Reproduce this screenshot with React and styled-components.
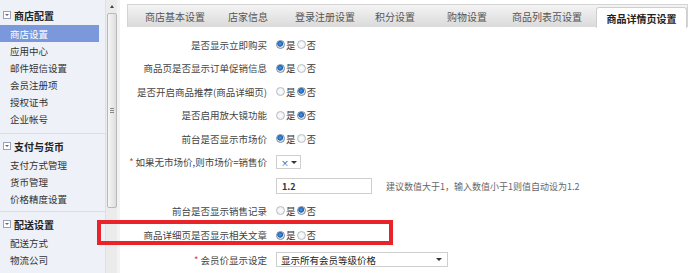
import React from "react";
import styled, { createGlobalStyle } from "styled-components";

const Global = createGlobalStyle`
  html, body { margin: 0; padding: 0; background: #fff; }
  body { font-family: "Noto Sans CJK SC", "Liberation Sans", sans-serif; color: #333; }
  * { box-sizing: border-box; }
`;

const Page = styled.div`
  position: relative;
  width: 690px;
  height: 273px;
  overflow: hidden;
  display: flex;
  background: #fff;
`;

const Sidebar = styled.div`
  width: 105px;
  flex: none;
  background: #eef1f7;
  display: flex;
  flex-direction: column;
`;

const Group = styled.div`
  padding: ${(p) => (p.$first ? "5px 0 6px" : "2px 0 4px")};
  border-top: ${(p) => (p.$first ? "none" : "1px solid #d9dde7")};
`;

const GroupHead = styled.div`
  height: 20px;
  display: flex;
  align-items: center;
  gap: 3px;
  padding-left: 3px;
  font-size: 10px;
  font-weight: bold;
  color: #222;
`;

const Toggle = styled.span`
  width: 8px;
  height: 8px;
  border: 1px solid #9aa3b5;
  background: #fff;
  display: flex;
  align-items: center;
  justify-content: center;
  &::after {
    content: "";
    border-left: 2px solid transparent;
    border-right: 2px solid transparent;
    border-top: 2px solid #667;
  }
`;

const Item = styled.div`
  height: 17px;
  width: 99px;
  display: flex;
  align-items: center;
  padding-left: 10px;
  font-size: 9.5px;
  white-space: nowrap;
  color: ${(p) => (p.$active ? "#fff" : "#333")};
  background: ${(p) => (p.$active ? "#7b98dc" : "transparent")};
`;

const Scroll = styled.div`
  width: 12px;
  flex: none;
  background: #ebebeb;
  border-left: 1px solid #e0e0e0;
  display: flex;
  flex-direction: column;
  align-items: center;
`;

const Arrow = styled.div`
  height: 12px;
  display: flex;
  align-items: center;
  &::after {
    content: "";
    border-left: 2.5px solid transparent;
    border-right: 2.5px solid transparent;
    border-bottom: 3px solid #444;
  }
`;

const Thumb = styled.div`
  width: 10px;
  height: 195px;
  margin-top: 1px;
  border: 1px solid #b9b9b9;
  border-radius: 2px;
  background: linear-gradient(to right, #f6f6f6, #dedede);
  display: flex;
  align-items: center;
  justify-content: center;
`;

const Grip = styled.div`
  width: 4px;
  height: 5px;
  border-top: 1px solid #888;
  border-bottom: 1px solid #888;
  position: relative;
  &::after {
    content: "";
    position: absolute;
    left: 0;
    right: 0;
    top: 1px;
    border-top: 1px solid #888;
  }
`;

const Gutter = styled.div`
  width: 3px;
  flex: none;
  background: #f3f3f3;
`;

const Main = styled.div`
  flex: 1;
  padding: 4px 3px 0 7px;
  display: flex;
  flex-direction: column;
`;

const TabBar = styled.div`
  height: 23px;
  display: flex;
  align-items: flex-end;
  background: linear-gradient(#f4f4f4, #dadada);
  border: 1px solid #d4d4d4;
  border-bottom: none;
  padding-left: 17px;
`;

const Tab = styled.div`
  height: ${(p) => (p.$active ? "21px" : "22px")};
  display: flex;
  align-items: center;
  justify-content: center;
  white-space: nowrap;
  flex: none;
  font-size: 10px;
  color: ${(p) => (p.$active ? "#222" : "#555")};
  font-weight: ${(p) => (p.$active ? "bold" : "normal")};
  background: ${(p) => (p.$active ? "#fff" : "transparent")};
  border: ${(p) => (p.$active ? "1px solid #cfcfcf" : "none")};
  border-bottom: none;
  border-radius: ${(p) => (p.$active ? "3px 3px 0 0" : "0")};
  margin-right: ${(p) => p.$mr}px;
  width: ${(p) => (p.$active ? "91px" : "auto")};
  margin-bottom: ${(p) => (p.$active ? "-1px" : "0")};
`;

const Form = styled.div`
  padding-top: 6px;
  display: flex;
  flex-direction: column;
`;

const Row = styled.div`
  height: ${(p) => p.$h || 23.5}px;
  display: flex;
  align-items: center;
`;

const Label = styled.div`
  width: 141px;
  flex: none;
  text-align: right;
  font-size: 9.5px;
  color: #444;
  white-space: nowrap;
  padding-right: 1px;
`;

const Star = styled.span`
  color: #e43b2c;
  margin-right: 2px;
`;

const Control = styled.div`
  margin-left: 8px;
  display: flex;
  align-items: center;
  font-size: 9.5px;
  color: #333;
`;

const Radio = styled.span`
  width: 9px;
  height: 9px;
  border-radius: 50%;
  flex: none;
  border: 1px solid ${(p) => (p.$on ? "#7a8aa0" : "#b8bcc4")};
  background: ${(p) =>
    p.$on
      ? "radial-gradient(circle at 45% 40%, #4aa0e8 0, #1a5fb4 45%, #dfe4ea 55%)"
      : "radial-gradient(circle, #ffffff 0, #e6e8ec 100%)"};
  margin-right: 1px;
`;

const Opt = styled.span`
  margin-right: 1px;
`;

const SmallSelect = styled.div`
  width: 25px;
  height: 14px;
  border: 1px solid #cfcfcf;
  display: flex;
  align-items: center;
  justify-content: space-between;
  padding: 0 3px 0 4px;
  font-size: 8px;
  color: #333;
  &::after {
    content: "";
    border-left: 3px solid transparent;
    border-right: 3px solid transparent;
    border-top: 3px solid #333;
  }
`;

const Input = styled.div`
  width: 96px;
  height: 16px;
  border: 1px solid #cfcfcf;
  display: flex;
  align-items: center;
  padding-left: 5px;
  font-size: 9px;
  font-weight: bold;
  color: #333;
`;

const Hint = styled.span`
  margin-left: 14px;
  font-size: 9px;
  color: #666;
`;

const Select = styled.div`
  width: 172px;
  height: 15px;
  border: 1px solid #cfcfcf;
  display: flex;
  align-items: center;
  justify-content: space-between;
  padding: 0 5px 0 4px;
  font-size: 9.5px;
  color: #222;
  &::after {
    content: "";
    border-left: 3px solid transparent;
    border-right: 3px solid transparent;
    border-top: 3px solid #333;
  }
`;

const Highlight = styled.div`
  position: absolute;
  left: 97px;
  top: 220px;
  width: 296px;
  height: 25px;
  border: 4px solid #e8242a;
  pointer-events: none;
`;

const groups = [
  { title: "商店配置", items: ["商店设置", "应用中心", "邮件短信设置", "会员注册项", "授权证书", "企业帐号"], active: 0 },
  { title: "支付与货币", items: ["支付方式管理", "货币管理", "价格精度设置"] },
  { title: "配送设置", items: ["配送方式", "物流公司", "配送地区"] },
];

const tabs = [
  { t: "商店基本设置", mr: 23 },
  { t: "店家信息", mr: 27 },
  { t: "登录注册设置", mr: 20 },
  { t: "积分设置", mr: 32 },
  { t: "购物设置", mr: 25 },
  { t: "商品列表页设置", mr: 14 },
  { t: "商品详情页设置", mr: 0, active: true },
];

const YesNo = ({ yes }) => (
  <Control>
    <Radio $on={yes} />
    <Opt>是</Opt>
    <Radio $on={!yes} />
    <Opt>否</Opt>
  </Control>
);

export default function App() {
  return (
    <Page>
      <Global />
      <Sidebar>
        {groups.map((g, gi) => (
          <Group key={g.title} $first={gi === 0}>
            <GroupHead>
              <Toggle />
              {g.title}
            </GroupHead>
            {g.items.map((it, i) => (
              <Item key={it} $active={g.active === i}>
                {it}
              </Item>
            ))}
          </Group>
        ))}
      </Sidebar>
      <Scroll>
        <Arrow />
        <Thumb>
          <Grip />
        </Thumb>
      </Scroll>
      <Gutter />
      <Main>
        <TabBar>
          {tabs.map((t) => (
            <Tab key={t.t} $active={t.active} $mr={t.mr}>
              {t.t}
            </Tab>
          ))}
        </TabBar>
        <Form>
          <Row>
            <Label>是否显示立即购买</Label>
            <YesNo yes />
          </Row>
          <Row>
            <Label>商品页是否显示订单促销信息</Label>
            <YesNo yes />
          </Row>
          <Row>
            <Label>是否开启商品推荐(商品详细页)</Label>
            <YesNo yes={false} />
          </Row>
          <Row>
            <Label>是否启用放大镜功能</Label>
            <YesNo yes={false} />
          </Row>
          <Row>
            <Label>前台是否显示市场价</Label>
            <YesNo yes />
          </Row>
          <Row>
            <Label>
              <Star>*</Star>如果无市场价,则市场价=销售价
            </Label>
            <Control>
              <SmallSelect>×</SmallSelect>
            </Control>
          </Row>
          <Row $h={24.5}>
            <Label />
            <Control>
              <Input>1.2</Input>
              <Hint>建议数值大于1，输入数值小于1则值自动设为1.2</Hint>
            </Control>
          </Row>
          <Row $h={24.5}>
            <Label>前台是否显示销售记录</Label>
            <YesNo yes={false} />
          </Row>
          <Row $h={24.5}>
            <Label>商品详细页是否显示相关文章</Label>
            <YesNo yes />
          </Row>
          <Row $h={24.5}>
            <Label>
              <Star>*</Star>会员价显示设定
            </Label>
            <Control>
              <Select>显示所有会员等级价格</Select>
            </Control>
          </Row>
        </Form>
      </Main>
      <Highlight />
    </Page>
  );
}
